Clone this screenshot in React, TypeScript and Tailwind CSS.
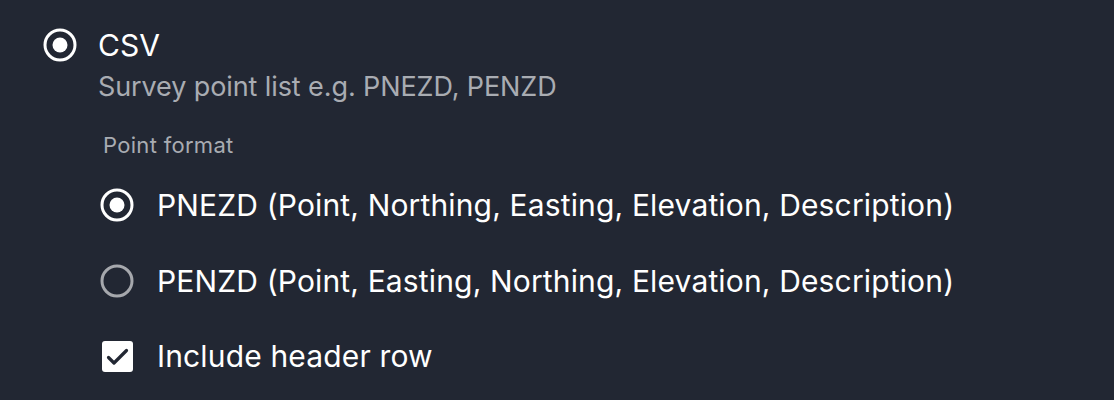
import React from "react";

function Radio({ checked }: { checked: boolean }) {
  return (
    <svg width="34" height="34" viewBox="0 0 34 34" className="shrink-0">
      <circle cx="17" cy="17" r="15" fill="none" stroke={checked ? "#ffffff" : "#a6a8ad"} strokeWidth="3" />
      {checked && <circle cx="17" cy="17" r="7.5" fill="#ffffff" />}
    </svg>
  );
}

function Checkbox() {
  return (
    <div className="w-[34px] h-[34px] shrink-0 flex items-center justify-center">
      <div className="w-[31px] h-[31px] rounded-[3px] bg-white">
        <svg width="31" height="31" viewBox="0 0 31 31">
          <path d="M6.5 16.5 L12 22 L24.5 9.5" fill="none" stroke="#222733" strokeWidth="3.2" strokeLinecap="round" strokeLinejoin="round" />
        </svg>
      </div>
    </div>
  );
}

export default function App() {
  return (
    <div
      className="w-[1114px] h-[400px] bg-[#222733] pl-[43px] pt-[28px] text-white overflow-hidden"
      style={{ fontFamily: "Inter, 'Open Sans', sans-serif" }}
    >
      <div className="flex items-center gap-[21px] h-[34px]">
        <Radio checked />
        <span className="text-[30px] leading-[34px]">CSV</span>
      </div>
      <div className="ml-[55px] mt-[9px] text-[27px] leading-[32px] tracking-[-0.1px] text-[#a9acb2]">
        Survey point list e.g. PNEZD, PENZD
      </div>
      <div className="ml-[60px] mt-[28px] text-[22px] leading-[28px] tracking-[0.3px] text-[#a9acb2]">Point format</div>
      <div className="ml-[57px]">
        <div className="flex items-center gap-[23px] h-[34px] mt-[29px]">
          <Radio checked />
          <span className="text-[30px] leading-[34px] tracking-[0.15px] whitespace-nowrap">PNEZD (Point, Northing, Easting, Elevation, Description)</span>
        </div>
        <div className="flex items-center gap-[23px] h-[34px] mt-[42px]">
          <Radio checked={false} />
          <span className="text-[30px] leading-[34px] tracking-[0.15px] whitespace-nowrap">PENZD (Point, Easting, Northing, Elevation, Description)</span>
        </div>
        <div className="flex items-center gap-[23px] h-[34px] mt-[41px]">
          <Checkbox />
          <span className="text-[30px] leading-[34px] tracking-[0.15px]">Include header row</span>
        </div>
      </div>
    </div>
  );
}
